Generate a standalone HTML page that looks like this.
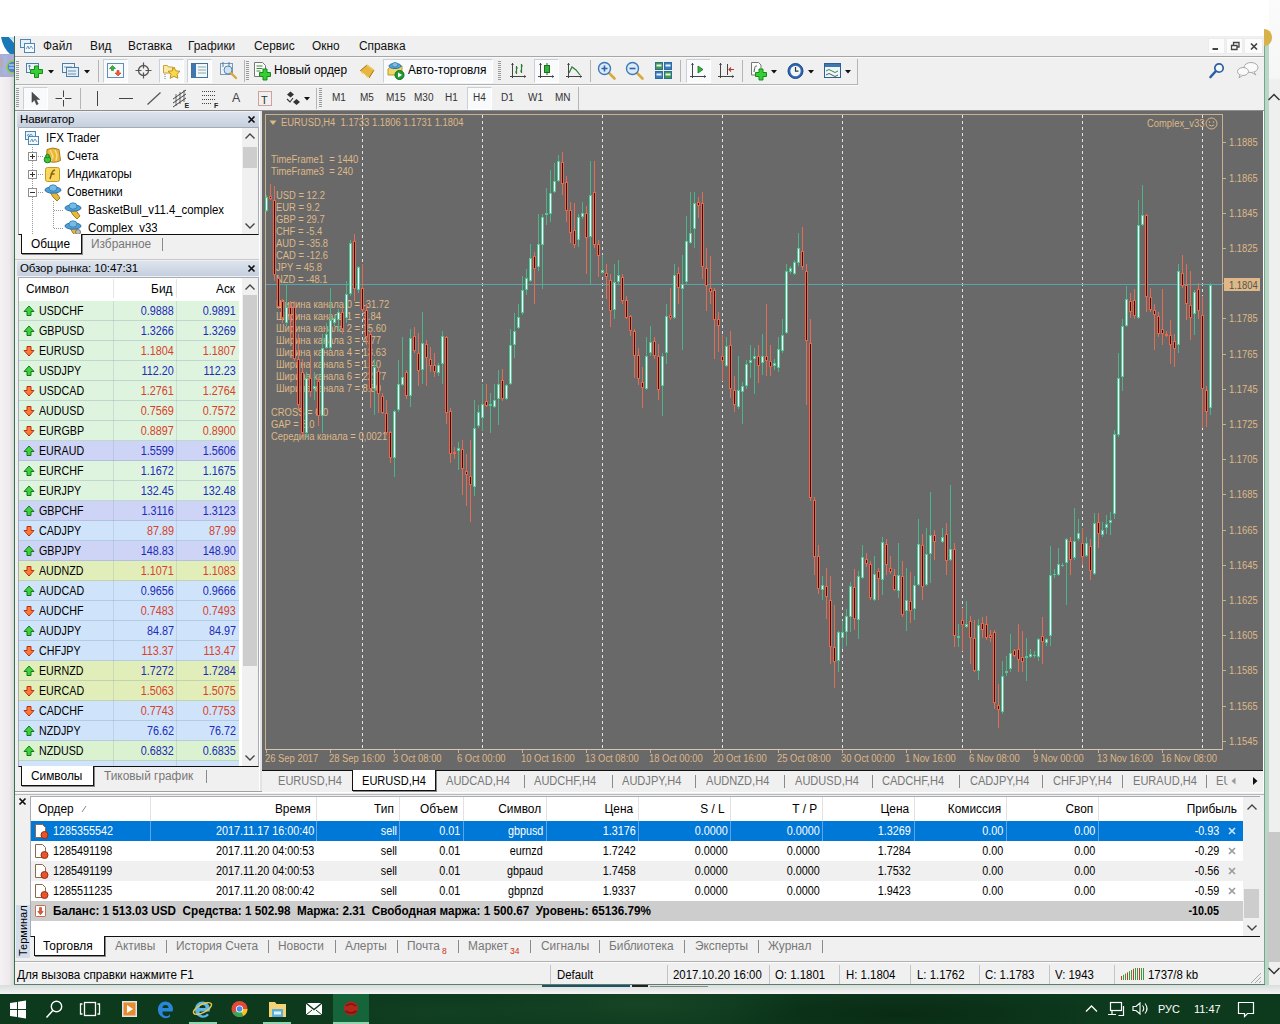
<!DOCTYPE html>
<html lang="ru">
<head>
<meta charset="utf-8">
<title>IFX Trader</title>
<style>
html,body{margin:0;padding:0;}
body{width:1280px;height:1024px;overflow:hidden;background:#fff;position:relative;font-family:"Liberation Sans","DejaVu Sans",sans-serif;font-size:12px;color:#000;}
.abs{position:absolute;}
div,span,svg{box-sizing:border-box;}
.t{position:absolute;white-space:nowrap;line-height:14px;transform-origin:0 50%;transform:scaleX(0.95);}
.t[style*="right:"]{transform-origin:100% 50%;}
.menu .t{font-size:12.5px;top:39px;color:#111;}
.hl{position:absolute;height:1px;background:#a0a0a0;}
.vl{position:absolute;width:1px;background:#a0a0a0;}
.ptitle{position:absolute;height:15px;background:linear-gradient(#dde4ee,#c5cfde);font-size:11.5px;line-height:15px;padding-left:3px;white-space:nowrap;letter-spacing:-0.1px;}
.tf{position:absolute;top:92px;font-size:10px;color:#333;line-height:12px;}
.ic{position:absolute;}
/* market watch */
#mw{position:absolute;left:19px;top:278px;width:222px;height:488px;background:#fff;}
#mw .r{position:absolute;left:0;width:220px;height:20px;border-bottom:1px solid rgba(120,150,170,.30);}
#mw .r span{position:absolute;top:3px;line-height:14px;font-size:12px;white-space:nowrap;}
#mw .s{left:20px;color:#000;transform-origin:0 50%;transform:scaleX(0.89);}
#mw .b{right:65px;transform-origin:100% 50%;transform:scaleX(0.9);}
#mw .a{right:3px;transform-origin:100% 50%;transform:scaleX(0.9);}
.up .b,.up .a{color:#1c2bb8;}
.dn .b,.dn .a{color:#d8402a;}
.g{background:#dff4df;}.l{background:#cdd4f6;}.bl{background:#cfe4fb;}.y{background:#e2eeb9;}.pg{background:#daf2cf;}
.arr{position:absolute;left:4px;top:4px;width:12px;height:12px;}
/* terminal */
.tr{position:absolute;left:31px;width:1212px;height:20px;font-size:12px;}
.tr span{position:absolute;top:3px;line-height:14px;white-space:nowrap;transform-origin:100% 50%;transform:scaleX(0.9);}
.tr span[style*="left:"]{transform-origin:0 50%;}
.tab{position:absolute;font-size:12.5px;color:#777;line-height:14px;white-space:nowrap;transform-origin:0 50%;transform:scaleX(0.95);}
.ct{position:absolute;font-size:10px;color:#deb887;line-height:12px;white-space:nowrap;transform-origin:0 0;transform:scaleX(0.94);margin-top:1px;}
.sep{position:absolute;width:1px;background:#8a8a8a;}
</style>
</head>
<body>
<!-- background bits outside the window -->
<svg class="abs" style="left:0;top:36px" width="14" height="41" viewBox="0 0 14 41"><rect x="0" y="0" width="14" height="18" fill="#fff"/><path d="M1 1 h8 l5 6 v11 h-4 q-7-6 -9-17 z" fill="#1878b8"/><path d="M9 1 l5 5 v-5 z" fill="#bfe3f5"/><rect x="0" y="18" width="14" height="23" fill="#a9afd4"/><rect x="0" y="22" width="3" height="10" fill="#b9a8b8"/><rect x="3" y="20" width="4" height="18" fill="#a3b6e0"/><circle cx="13" cy="31" r="6" fill="#4d86c8" stroke="#9bc34a" stroke-width="1.500"/><path d="M9 29 h5 M9 32 h5" stroke="#dfeaf5" stroke-width="1"/></svg>
<div class="abs" style="left:0;top:77px;width:14px;height:917px;background:linear-gradient(90deg,#f6f2f4,#ece8ec 70%,#cfdccf);"></div>
<div class="abs" style="left:1264px;top:36px;width:1px;height:949px;background:#7aa48c;"></div><div class="abs" style="left:1265px;top:36px;width:4px;height:949px;background:#b9d7c6;"></div>
<div class="abs" style="left:1269px;top:0;width:11px;height:994px;background:linear-gradient(#fbfbfb 0,#f6f6f6 78px,#efefef 80px,#efefef 100%);"></div>
<div class="abs" style="left:1267px;top:832px;width:13px;height:130px;background:#c8c8c8;"></div>
<div class="abs" style="left:0;top:985px;width:1280px;height:9px;background:linear-gradient(#d9dedb,#f4f4f4);"></div>
<svg class="abs" style="left:1268px;top:92px" width="12" height="10" viewBox="0 0 12 10"><path d="M0.500 8 l5.500-5.500 5.500 5.500" fill="none" stroke="#333" stroke-width="1.500"/></svg>
<svg class="abs" style="left:1268px;top:966px" width="12" height="10" viewBox="0 0 12 10"><path d="M0.500 2 l5.500 5.500 5.500-5.500" fill="none" stroke="#333" stroke-width="1.500"/></svg>
<div class="abs" style="left:1264px;top:29px;width:8px;height:17px;border-radius:0 8px 8px 0;background:#d7b24a"></div>
<div class="abs" style="left:542px;top:985px;width:88px;height:2px;background:#1f5268"></div><div class="abs" style="left:632px;top:985px;width:16px;height:2px;background:#222"></div><div class="abs" style="left:650px;top:986px;width:58px;height:1px;background:#8a8a8a"></div>
<!-- window -->
<div class="abs" style="left:14px;top:36px;width:1250px;height:949px;background:#f0f0f0;border-left:1px solid #3d6b55;"></div>

<div class="menu">
<span class="t" style="left:43px">Файл</span>
<span class="t" style="left:90px">Вид</span>
<span class="t" style="left:128px">Вставка</span>
<span class="t" style="left:188px">Графики</span>
<span class="t" style="left:254px">Сервис</span>
<span class="t" style="left:312px">Окно</span>
<span class="t" style="left:359px">Справка</span>
</div>
<!-- app icon in menu bar -->
<svg class="ic" style="left:19px;top:38px" width="18" height="17" viewBox="0 0 18 17"><rect x="1.5" y="1.5" width="10" height="8" fill="#e8f1f8" stroke="#4d86b5"/><rect x="5.500" y="5.500" width="10" height="9" fill="#f4f9fc" stroke="#4d86b5"/><path d="M7 11 l2-3 1 3 2-3 2 3" fill="none" stroke="#4d86b5" stroke-width="0.8"/></svg>
<div class="hl" style="left:15px;top:56px;width:1249px;background:#a6a6a6"></div>
<div class="hl" style="left:15px;top:57px;width:1249px;background:#fafafa"></div>
<div class="hl" style="left:15px;top:84px;width:843px;background:#b4b4b4"></div>
<div class="hl" style="left:15px;top:85px;width:843px;background:#fafafa"></div>
<div class="hl" style="left:15px;top:110px;width:1249px;background:#8d8d8d"></div>
<!-- window buttons -->
<div class="abs" style="left:1208px;top:38px;width:17px;height:16px;background:#fcfcfc;border:1px solid #ececec"></div>
<div class="abs" style="left:1226px;top:38px;width:17px;height:16px;background:#fcfcfc;border:1px solid #ececec"></div>
<div class="abs" style="left:1244px;top:38px;width:19px;height:16px;background:#fcfcfc;border:1px solid #ececec"></div>
<svg class="ic" style="left:1208px;top:38px" width="56" height="17" viewBox="0 0 56 17"><path d="M4.500 11 h5.500" stroke="#444" stroke-width="2"/><path d="M23.500 11.500 h5.500 v-4 h-5.500 z M25.500 7 v-2.500 h5.500 v4.500 h-2" fill="none" stroke="#444" stroke-width="1.300"/><path d="M43 5.500 l6 6 M49 5.500 l-6 6" stroke="#444" stroke-width="1.700"/></svg>
<!-- grips -->
<div class="abs" style="left:16px;top:61px;width:3px;height:20px;background:repeating-linear-gradient(#9a9a9a 0 1px,transparent 1px 2px)"></div>
<div class="abs" style="left:16px;top:88px;width:3px;height:20px;background:repeating-linear-gradient(#9a9a9a 0 1px,transparent 1px 2px)"></div>
<div class="abs" style="left:319px;top:88px;width:3px;height:20px;background:repeating-linear-gradient(#9a9a9a 0 1px,transparent 1px 2px)"></div>
<div class="abs" style="left:498px;top:61px;width:3px;height:20px;background:repeating-linear-gradient(#9a9a9a 0 1px,transparent 1px 2px)"></div>
<div class="abs" style="left:246px;top:61px;width:3px;height:20px;background:repeating-linear-gradient(#9a9a9a 0 1px,transparent 1px 2px)"></div>
<!-- pressed button boxes -->
<div class="abs" style="left:103px;top:59px;width:25px;height:24px;background:#f8fafc;border:1px solid #c9d0d8;border-right-color:#fff;border-bottom-color:#fff"></div>
<div class="abs" style="left:159px;top:59px;width:25px;height:24px;background:#f8fafc;border:1px solid #c9d0d8;border-right-color:#fff;border-bottom-color:#fff"></div>
<div class="abs" style="left:187px;top:59px;width:25px;height:24px;background:#f8fafc;border:1px solid #c9d0d8;border-right-color:#fff;border-bottom-color:#fff"></div>
<div class="abs" style="left:383px;top:59px;width:110px;height:24px;background:#f8fafc;border:1px solid #c9d0d8;border-right-color:#fff;border-bottom-color:#fff"></div>
<div class="abs" style="left:534px;top:59px;width:25px;height:24px;background:#f8fafc;border:1px solid #c9d0d8;border-right-color:#fff;border-bottom-color:#fff"></div>
<div class="abs" style="left:686px;top:59px;width:25px;height:24px;background:#f8fafc;border:1px solid #c9d0d8;border-right-color:#fff;border-bottom-color:#fff"></div>
<div class="abs" style="left:23px;top:87px;width:25px;height:23px;background:#f8fafc;border:1px solid #c9d0d8;border-right-color:#fff;border-bottom-color:#fff"></div>
<div class="abs" style="left:467px;top:87px;width:25px;height:23px;background:#f8fafc;border:1px solid #c9d0d8;border-right-color:#fff;border-bottom-color:#fff"></div>
<!-- separators -->
<div class="vl" style="left:98px;top:60px;height:22px;background:#b5b5b5"></div>
<div class="vl" style="left:244px;top:60px;height:22px;background:#b5b5b5"></div>
<div class="vl" style="left:590px;top:60px;height:22px;background:#b5b5b5"></div>
<div class="vl" style="left:680px;top:60px;height:22px;background:#b5b5b5"></div>
<div class="vl" style="left:742px;top:60px;height:22px;background:#b5b5b5"></div>
<div class="vl" style="left:857px;top:59px;height:25px;background:#b5b5b5"></div>
<div class="vl" style="left:80px;top:88px;height:21px;background:#b5b5b5"></div>
<div class="vl" style="left:316px;top:88px;height:21px;background:#b5b5b5"></div>
<div class="vl" style="left:578px;top:87px;height:23px;background:#b5b5b5"></div>
<!-- row 1 icons -->
<svg class="ic" style="left:25px;top:62px" width="32" height="17" viewBox="0 0 32 17"><rect x="1.500" y="1.500" width="12" height="9" fill="#eef5fa" stroke="#4b7ea8"/><path d="M3 4 h3 M4.500 3 v5" stroke="#4b7ea8" stroke-width="0.800"/><path d="M10 6 h4 v-3.500 h4 v3.500 h4 v4 h-4 v4 h-4 v-4 h-4 z" transform="translate(-4.500,1.500)" fill="#35cf35" stroke="#178a1b"/><path d="M23 8 h6 l-3 3.500 z" fill="#111"/></svg>
<svg class="ic" style="left:61px;top:62px" width="32" height="17" viewBox="0 0 32 17"><rect x="1.500" y="1.500" width="12" height="9" fill="#eef5fa" stroke="#4b7ea8"/><rect x="5.500" y="5.500" width="12" height="9" fill="#e1ecf5" stroke="#4b7ea8"/><path d="M3 5 h8 M7 9 h8 M7 12 h8" stroke="#4b7ea8" stroke-width="0.800"/><path d="M23 8 h6 l-3 3.500 z" fill="#111"/></svg>
<svg class="ic" style="left:107px;top:63px" width="17" height="16" viewBox="0 0 17 16"><rect x="0.500" y="0.500" width="16" height="14" fill="#f6fafd" stroke="#5d8fb8"/><path d="M5.500 2.500 l3 3 h-2 v2 h-2 v-2 h-2 z" fill="#2fb93a" stroke="#14781a" stroke-width="0.600"/><path d="M11 13 l3-3 h-2 v-2.500 h-2 v2.500 h-2 z" fill="#f26038" stroke="#b5320f" stroke-width="0.600"/></svg>
<svg class="ic" style="left:135px;top:62px" width="17" height="17" viewBox="0 0 17 17"><circle cx="8.500" cy="8.500" r="5" fill="none" stroke="#555" stroke-width="1.300"/><path d="M8.500 0.500 v6 M8.500 10.500 v6 M0.500 8.500 h6 M10.500 8.500 h6" stroke="#555" stroke-width="1.200"/></svg>
<svg class="ic" style="left:162px;top:62px" width="19" height="18" viewBox="0 0 19 18"><path d="M1.500 3.500 h4 l1 1.500 h4 v6 h-9 z" fill="#fbe9a4" stroke="#caa43a"/><path d="M3 12 v5" stroke="#777" stroke-dasharray="1 1"/><path d="M12 5 l1.800 3.800 4.200.5 -3 2.900 .8 4.100 -3.800-2 -3.800 2 .8-4.100 -3-2.900 4.200-.5 z" fill="#fbd84a" stroke="#b88a17" stroke-width="0.900"/></svg>
<svg class="ic" style="left:191px;top:63px" width="17" height="16" viewBox="0 0 17 16"><rect x="0.500" y="0.500" width="16" height="14" fill="#f2f7fb" stroke="#41719c"/><rect x="1" y="1" width="4" height="13" fill="#3f78ad"/><path d="M7 4 h8 M7 7 h8 M7 10 h8" stroke="#8aa" stroke-width="1"/></svg>
<svg class="ic" style="left:219px;top:61px" width="20" height="20" viewBox="0 0 20 20"><rect x="1.500" y="2.500" width="12" height="11" fill="#eef3f8" stroke="#7d98b4"/><path d="M4 1 v5 M10 1 v5" stroke="#4b7ea8"/><circle cx="9" cy="9" r="4" fill="#cfe3f5" stroke="#5c86ad"/><path d="M12 12 l5 5" stroke="#d9a93b" stroke-width="2.400" stroke-linecap="round"/></svg>
<svg class="ic" style="left:253px;top:61px" width="18" height="20" viewBox="0 0 18 20"><path d="M1.500 1.500 h8 l3 3 v11 h-11 z" fill="#fbfbfb" stroke="#777"/><path d="M3.500 5 h6 M3.500 7.500 h6 M3.500 10 h4" stroke="#3a8a3f" stroke-width="1"/><path d="M7 12.500 h3.500 v-3.500 h4 v3.500 h3.500 v4 h-3.500 v3.500 h-4 v-3.500 h-3.500 z" transform="translate(-0.500,-1)" fill="#35cf35" stroke="#178a1b"/></svg>
<span class="t" style="left:274px;top:63px;font-size:12.5px">Новый ордер</span>
<svg class="ic" style="left:358px;top:62px" width="18" height="18" viewBox="0 0 18 18"><path d="M2 9 l7-6 7 5 -5 8 z" fill="#e8b640" stroke="#9c7416"/><path d="M2 9 l9 7 M2 10.500 l8.500 6.500" stroke="#fff3c4" stroke-width="1"/><path d="M9 3 l7 5" stroke="#f6d777" stroke-width="1.500"/></svg>
<svg class="ic" style="left:386px;top:61px" width="20" height="20" viewBox="0 0 20 20"><path d="M2 8 l4-3 h10 v9 h-14 z" fill="#f1d66a" stroke="#b99a2a"/><ellipse cx="9" cy="5" rx="6" ry="2.600" fill="#58a5d8" stroke="#2d73a8"/><ellipse cx="9" cy="3.800" rx="3" ry="2.300" fill="#7cc0ea" stroke="#2d73a8" stroke-width="0.700"/><circle cx="13.500" cy="14" r="4.500" fill="#1f9d32" stroke="#0f6a1e"/><path d="M12 11.500 l4 2.500 -4 2.500 z" fill="#fff"/></svg>
<span class="t" style="left:408px;top:63px;font-size:12.5px">Авто-торговля</span>
<svg class="ic" style="left:510px;top:62px" width="17" height="17" viewBox="0 0 17 17"><path d="M2.500 1 v15 M0 14.500 h16" stroke="#444" stroke-width="1"/><path d="M6.500 4 v8 M5 10 h1.500 M6.500 6 h1.500 M11.500 2 v9 M10 9 h1.500 M11.500 4 h1.500" stroke="#2c7d32" stroke-width="1.200"/><path d="M14 13 l2 1.500 -2 1.500 z M1 3 l1.500-2 1.500 2 z" fill="#444"/></svg>
<svg class="ic" style="left:538px;top:62px" width="17" height="17" viewBox="0 0 17 17"><path d="M2.500 1 v15 M0 14.500 h16" stroke="#444" stroke-width="1"/><path d="M9 1 v12" stroke="#1f6e25" stroke-width="1"/><rect x="6.500" y="3.500" width="5" height="7" fill="#35b23c" stroke="#1f6e25"/><path d="M14 13 l2 1.500 -2 1.500 z M1 3 l1.500-2 1.500 2 z" fill="#444"/></svg>
<svg class="ic" style="left:566px;top:62px" width="17" height="17" viewBox="0 0 17 17"><path d="M2.500 1 v15 M0 14.500 h16" stroke="#444" stroke-width="1"/><path d="M3 11 l3-6 4 3 4 5" fill="none" stroke="#2c7d32" stroke-width="1.200"/><path d="M14 13 l2 1.500 -2 1.500 z M1 3 l1.500-2 1.500 2 z" fill="#444"/></svg>
<svg class="ic" style="left:597px;top:61px" width="20" height="20" viewBox="0 0 20 20"><path d="M11.500 11.500 l6 6" stroke="#d9a93b" stroke-width="2.600" stroke-linecap="round"/><circle cx="7.500" cy="7.500" r="6" fill="#dcebf9" stroke="#3d78b8" stroke-width="1.400"/><path d="M4.500 7.500 h6 M7.500 4.500 v6" stroke="#2a62a5" stroke-width="1.600"/></svg>
<svg class="ic" style="left:625px;top:61px" width="20" height="20" viewBox="0 0 20 20"><path d="M11.500 11.500 l6 6" stroke="#d9a93b" stroke-width="2.600" stroke-linecap="round"/><circle cx="7.500" cy="7.500" r="6" fill="#dcebf9" stroke="#3d78b8" stroke-width="1.400"/><path d="M4.500 7.500 h6" stroke="#2a62a5" stroke-width="1.600"/></svg>
<svg class="ic" style="left:655px;top:62px" width="17" height="17" viewBox="0 0 17 17"><rect x="0.500" y="0.500" width="7" height="7" fill="#3f9e3f" stroke="#2c6c9c"/><rect x="9.500" y="0.500" width="7" height="7" fill="#3e7cc0" stroke="#2c6c9c"/><rect x="0.500" y="9.500" width="7" height="7" fill="#3e7cc0" stroke="#2c6c9c"/><rect x="9.500" y="9.500" width="7" height="7" fill="#3f9e3f" stroke="#2c6c9c"/><path d="M1.500 3.500 h5 M10.500 3.500 h5 M1.500 12.500 h5 M10.500 12.500 h5" stroke="#eaf2fa" stroke-width="2"/></svg>
<svg class="ic" style="left:690px;top:62px" width="17" height="17" viewBox="0 0 17 17"><path d="M2.500 1 v15 M0 14.500 h16" stroke="#444" stroke-width="1"/><path d="M8 4 l5 3.500 -5 3.500 z" fill="#35b23c" stroke="#1f6e25" stroke-width="0.800"/><path d="M14 13 l2 1.500 -2 1.500 z M1 3 l1.500-2 1.500 2 z" fill="#444"/></svg>
<svg class="ic" style="left:718px;top:62px" width="17" height="17" viewBox="0 0 17 17"><path d="M2.500 1 v15 M0 14.500 h16 M9.500 2 v11" stroke="#444" stroke-width="1"/><path d="M16 7.500 h-5 M13 5.500 l-2 2 2 2" fill="none" stroke="#b03a2e" stroke-width="1.100"/><path d="M14 13 l2 1.500 -2 1.500 z M1 3 l1.500-2 1.500 2 z" fill="#444"/></svg>
<svg class="ic" style="left:749px;top:61px" width="30" height="20" viewBox="0 0 30 20"><path d="M2.500 1.500 h7 l2.500 2.500 v10 h-9.500 z" fill="#fbfbfb" stroke="#777"/><path d="M5 11 c1-6 1-6 3-6" fill="none" stroke="#555" stroke-width="1"/><path d="M6.500 11.500 h3.500 v-3.500 h4 v3.500 h3.500 v4 h-3.500 v3.500 h-4 v-3.500 h-3.500 z" fill="#35cf35" stroke="#178a1b"/><path d="M22 9 h6 l-3 3.500 z" fill="#111"/></svg>
<svg class="ic" style="left:786px;top:61px" width="30" height="20" viewBox="0 0 30 20"><circle cx="9.500" cy="10" r="7.500" fill="#2e67b2" stroke="#1c4482"/><circle cx="9.500" cy="10" r="5.200" fill="#f1f6fb"/><path d="M9.500 6 v4.200 h3" fill="none" stroke="#333" stroke-width="1.200"/><path d="M22 9 h6 l-3 3.500 z" fill="#111"/></svg>
<svg class="ic" style="left:823px;top:62px" width="30" height="18" viewBox="0 0 30 18"><rect x="1.500" y="1.500" width="16" height="14" fill="#eef5fb" stroke="#2e5f93"/><rect x="2" y="2" width="15" height="3" fill="#3f78ad"/><path d="M3 9 q3-3 6 0 t6 0" fill="none" stroke="#3a8a3f" stroke-width="1"/><path d="M3 13 q3-3 6 0 t6 0" fill="none" stroke="#555" stroke-width="1"/><path d="M22 8 h6 l-3 3.500 z" fill="#111"/></svg>
<!-- right side search + chat -->
<svg class="ic" style="left:1208px;top:62px" width="18" height="18" viewBox="0 0 18 18"><path d="M2.500 15 l5-5.500" stroke="#2b5fa5" stroke-width="2.600" stroke-linecap="round"/><circle cx="11" cy="6" r="4.200" fill="#f5f9fd" stroke="#2b5fa5" stroke-width="1.700"/></svg>
<svg class="ic" style="left:1236px;top:61px" width="24" height="19" viewBox="0 0 24 19"><ellipse cx="15" cy="6.500" rx="7" ry="5" fill="#fafafa" stroke="#a8a8a8"/><path d="M18 11 l2 3 -4-2.300" fill="#fafafa" stroke="#a8a8a8"/><ellipse cx="7" cy="10.500" rx="5.500" ry="4" fill="#fafafa" stroke="#a8a8a8"/><path d="M4 13.800 l-1 3 3.500-2.300" fill="#fafafa" stroke="#a8a8a8"/></svg>
<!-- row 2 icons -->
<svg class="ic" style="left:29px;top:91px" width="13" height="15" viewBox="0 0 16 19"><path d="M3.500 1.500 v13 l3.200-3 2.600 6 2.200-1 -2.600-5.800 h4.400 z" fill="#4d4d4d" stroke="#3a3a3a" stroke-width="0.600"/></svg>
<svg class="ic" style="left:55px;top:90px" width="17" height="17" viewBox="0 0 17 17"><path d="M8.500 0.500 v6.500 M8.500 10 v6.500 M0.500 8.500 h6.500 M10 8.500 h6.500" stroke="#444" stroke-width="1"/></svg>
<div class="abs" style="left:97px;top:91px;width:1px;height:15px;background:#444"></div>
<div class="abs" style="left:119px;top:98px;width:14px;height:1px;background:#444"></div>
<svg class="ic" style="left:146px;top:91px" width="16" height="15" viewBox="0 0 16 15"><path d="M1.500 13.500 l13-12" stroke="#555" stroke-width="1.200"/></svg>
<svg class="ic" style="left:172px;top:89px" width="20" height="19" viewBox="0 0 20 19"><path d="M1 13 l13-9 M1 9 l13-9 M1 17 l13-9" stroke="#444" stroke-width="1" transform="translate(0,1)"/><path d="M4 4 v12 M8 2 v12 M12 0 v12" stroke="#444" stroke-width="0.800" transform="translate(0,1)"/><text x="12.500" y="18.500" font-size="7" font-weight="bold" font-family="Liberation Sans, sans-serif" fill="#222">E</text></svg>
<svg class="ic" style="left:201px;top:90px" width="20" height="18" viewBox="0 0 20 18"><path d="M1 1.500 h13 M1 5.500 h13 M1 9.500 h13 M1 13.500 h10" stroke="#444" stroke-width="1" stroke-dasharray="1 1"/><text x="13" y="17.500" font-size="7" font-weight="bold" font-family="Liberation Sans, sans-serif" fill="#222">F</text></svg>
<span class="t" style="left:232px;top:91px;font-size:13px;color:#444">A</span>
<svg class="ic" style="left:257px;top:90px" width="16" height="17" viewBox="0 0 16 17"><rect x="1.500" y="1.500" width="13" height="14" fill="none" stroke="#b0504a" stroke-dasharray="1 1"/><text x="4" y="13.500" font-size="11" font-family="Liberation Sans, sans-serif" fill="#333">T</text></svg>
<svg class="ic" style="left:284px;top:90px" width="30" height="17" viewBox="0 0 30 17"><path d="M3 4.500 l3.500-3 3.500 3 -3.500 3 z M9 12 l3.500-3 3.500 3 -3.500 3 z" fill="#333"/><path d="M3 9 l3 3 3-4" fill="none" stroke="#333" stroke-width="1.100"/><path d="M20 7 h6 l-3 3.500 z" fill="#111"/></svg>
<span class="tf" style="left:332px">M1</span><span class="tf" style="left:360px">M5</span><span class="tf" style="left:386px">M15</span><span class="tf" style="left:414px">M30</span><span class="tf" style="left:445px">H1</span><span class="tf" style="left:473px">H4</span><span class="tf" style="left:501px">D1</span><span class="tf" style="left:528px">W1</span><span class="tf" style="left:555px">MN</span>

<!-- Navigator -->
<div class="abs" style="left:15px;top:111px;width:246px;height:681px;background:#f0f0f0"></div>
<div class="ptitle" style="left:17px;top:112px;width:243px">Навигатор</div>
<svg class="ic" style="left:247px;top:115px" width="9" height="9" viewBox="0 0 9 9"><path d="M1.500 1.500 l6 6 M7.500 1.500 l-6 6" stroke="#111" stroke-width="1.700"/></svg>
<div class="abs" style="left:18px;top:127px;width:241px;height:108px;background:#fff;border:1px solid #a5acb5;border-bottom:1px solid #111"></div>
<!-- tree scrollbar -->
<div class="abs" style="left:242px;top:128px;width:16px;height:106px;background:#f0f0f0"></div>
<div class="abs" style="left:243px;top:147px;width:14px;height:21px;background:#cdcdcd"></div>
<svg class="ic" style="left:244px;top:132px" width="12" height="8" viewBox="0 0 12 8"><path d="M1.500 6.500 l4.500-4.500 4.500 4.500" fill="none" stroke="#444" stroke-width="1.400"/></svg>
<svg class="ic" style="left:244px;top:222px" width="12" height="8" viewBox="0 0 12 8"><path d="M1.500 1.500 l4.500 4.500 4.500-4.500" fill="none" stroke="#444" stroke-width="1.400"/></svg>
<!-- tree dotted lines -->
<div class="abs" style="left:32px;top:147px;width:1px;height:87px;background:repeating-linear-gradient(#999 0 1px,transparent 1px 2px)"></div>
<div class="abs" style="left:53px;top:201px;width:1px;height:28px;background:repeating-linear-gradient(#999 0 1px,transparent 1px 2px)"></div>
<div class="abs" style="left:36px;top:156px;width:7px;height:1px;background:repeating-linear-gradient(90deg,#999 0 1px,transparent 1px 2px)"></div>
<div class="abs" style="left:36px;top:174px;width:7px;height:1px;background:repeating-linear-gradient(90deg,#999 0 1px,transparent 1px 2px)"></div>
<div class="abs" style="left:36px;top:192px;width:7px;height:1px;background:repeating-linear-gradient(90deg,#999 0 1px,transparent 1px 2px)"></div>
<div class="abs" style="left:54px;top:210px;width:9px;height:1px;background:repeating-linear-gradient(90deg,#999 0 1px,transparent 1px 2px)"></div>
<div class="abs" style="left:54px;top:228px;width:9px;height:1px;background:repeating-linear-gradient(90deg,#999 0 1px,transparent 1px 2px)"></div>
<!-- expand boxes -->
<svg class="ic" style="left:28px;top:152px" width="9" height="9" viewBox="0 0 9 9"><rect x="0.500" y="0.500" width="8" height="8" fill="#fff" stroke="#8f8f8f"/><path d="M2 4.500 h5 M4.500 2 v5" stroke="#333"/></svg>
<svg class="ic" style="left:28px;top:170px" width="9" height="9" viewBox="0 0 9 9"><rect x="0.500" y="0.500" width="8" height="8" fill="#fff" stroke="#8f8f8f"/><path d="M2 4.500 h5 M4.500 2 v5" stroke="#333"/></svg>
<svg class="ic" style="left:28px;top:188px" width="9" height="9" viewBox="0 0 9 9"><rect x="0.500" y="0.500" width="8" height="8" fill="#fff" stroke="#8f8f8f"/><path d="M2 4.500 h5" stroke="#333"/></svg>
<!-- tree icons -->
<svg class="ic" style="left:24px;top:130px" width="17" height="17" viewBox="0 0 17 17"><rect x="1.500" y="1.500" width="10" height="8" fill="#e8f1f8" stroke="#4d86b5"/><rect x="4.500" y="6.500" width="10" height="8" fill="#f4f9fc" stroke="#4d86b5"/><path d="M6 12 l2-3 1 3 2-3 2 3 M3 6 l1.500-2 1 2 1.500-2 1.500 2" fill="none" stroke="#4d86b5" stroke-width="0.800"/></svg>
<svg class="ic" style="left:43px;top:147px" width="19" height="18" viewBox="0 0 19 18"><path d="M4 2.500 q6-3 12 0 l1.500 11 q-7 3.500 -14 0 z" fill="#e9b83a" stroke="#a87c14"/><path d="M7 3 l3 6 -2 5 M12 3 l2 5 -1 6" fill="none" stroke="#f8e08a" stroke-width="1.300"/><circle cx="4.500" cy="12.500" r="3.300" fill="#3ec43e" stroke="#1c7d22"/><circle cx="4.500" cy="9" r="1.800" fill="#3ec43e" stroke="#1c7d22"/></svg>
<svg class="ic" style="left:44px;top:166px" width="17" height="17" viewBox="0 0 17 17"><rect x="1.500" y="1.500" width="14" height="14" rx="2" fill="#f7d75c" stroke="#c39a27"/><path d="M6 13 c2.500-8 2-8 5-9 M6.500 8 h4" fill="none" stroke="#8a5a12" stroke-width="1.400"/></svg>
<svg class="ic" style="left:44px;top:183px" width="20" height="19" viewBox="0 0 20 19"><path d="M6 9 l5-1 5 7 -3 3 -4-4 z" fill="#e9b83a" stroke="#a87c14"/><ellipse cx="9" cy="7" rx="8" ry="3.200" fill="#4f9fd6" stroke="#2d73a8"/><ellipse cx="9" cy="5" rx="4" ry="3.200" fill="#74bbe8" stroke="#2d73a8" stroke-width="0.700"/></svg>
<svg class="ic" style="left:64px;top:201px" width="20" height="19" viewBox="0 0 20 19"><path d="M6 9 l5-1 5 7 -3 3 -4-4 z" fill="#e9b83a" stroke="#a87c14"/><ellipse cx="9" cy="7" rx="8" ry="3.200" fill="#4f9fd6" stroke="#2d73a8"/><ellipse cx="9" cy="5" rx="4" ry="3.200" fill="#74bbe8" stroke="#2d73a8" stroke-width="0.700"/></svg>
<svg class="ic" style="left:64px;top:219px" width="20" height="15" viewBox="0 0 20 15"><path d="M6 9 l5-1 5 7 -3 3 -4-4 z" fill="#e9b83a" stroke="#a87c14"/><ellipse cx="9" cy="7" rx="8" ry="3.200" fill="#4f9fd6" stroke="#2d73a8"/><ellipse cx="9" cy="5" rx="4" ry="3.200" fill="#74bbe8" stroke="#2d73a8" stroke-width="0.700"/><circle cx="14" cy="13" r="2.500" fill="#bbb" stroke="#777"/></svg>
<!-- tree labels -->
<span class="t" style="left:46px;top:131px">IFX Trader</span>
<span class="t" style="left:67px;top:149px">Счета</span>
<span class="t" style="left:67px;top:167px">Индикаторы</span>
<span class="t" style="left:67px;top:185px">Советники</span>
<span class="t" style="left:88px;top:203px">BasketBull_v11.4_complex</span>
<span class="t" style="left:88px;top:221px;height:13px;overflow:hidden">Complex_v33</span>
<!-- navigator tabs -->
<div class="abs" style="left:21px;top:234px;width:61px;height:20px;background:#fff;border:1px solid #111;border-top:none;box-shadow:1px 1px 0 #888"></div>
<span class="t" style="left:31px;top:237px;font-size:12.5px">Общие</span>
<span class="tab" style="left:91px;top:237px">Избранное</span>
<div class="sep" style="left:162px;top:238px;height:13px"></div>
<div class="hl" style="left:15px;top:259px;width:246px;background:#c8c8c8"></div>
<!-- Market watch -->
<div class="ptitle" style="left:17px;top:261px;width:243px">Обзор рынка: 10:47:31</div>
<svg class="ic" style="left:247px;top:264px" width="9" height="9" viewBox="0 0 9 9"><path d="M1.500 1.500 l6 6 M7.500 1.500 l-6 6" stroke="#111" stroke-width="1.700"/></svg>
<div class="abs" style="left:18px;top:277px;width:241px;height:490px;background:#fff;border:1px solid #a5acb5;border-bottom:1px solid #111"></div>
<div class="abs" style="left:242px;top:278px;width:16px;height:488px;background:#f0f0f0"></div>
<div class="abs" style="left:243px;top:295px;width:14px;height:371px;background:#cdcdcd"></div>
<svg class="ic" style="left:244px;top:283px" width="12" height="8" viewBox="0 0 12 8"><path d="M1.500 6.500 l4.500-4.500 4.500 4.500" fill="none" stroke="#444" stroke-width="1.400"/></svg>
<svg class="ic" style="left:244px;top:754px" width="12" height="8" viewBox="0 0 12 8"><path d="M1.500 1.500 l4.500 4.500 4.500-4.500" fill="none" stroke="#444" stroke-width="1.400"/></svg>
<!-- MW tabs -->
<div class="abs" style="left:21px;top:766px;width:73px;height:20px;background:#fff;border:1px solid #111;border-top:none;box-shadow:1px 1px 0 #888"></div>
<span class="t" style="left:31px;top:769px;font-size:12.5px">Символы</span>
<span class="tab" style="left:104px;top:769px">Тиковый график</span>
<div class="sep" style="left:206px;top:770px;height:13px"></div>
<div class="abs" style="left:259px;top:111px;width:1px;height:681px;background:#fff"></div>
<div class="abs" style="left:260px;top:111px;width:2px;height:681px;background:#e3e3e3"></div>
<div class="hl" style="left:15px;top:791px;width:247px;background:#a0a0a0"></div>

<div id="mw">
<div class="abs" style="left:0;top:0;width:222px;height:22px;background:#fff"></div><div class="abs" style="left:94px;top:1px;width:1px;height:19px;background:#e5e5e5"></div><div class="abs" style="left:157px;top:1px;width:1px;height:19px;background:#e5e5e5"></div><span class="t" style="left:7px;top:4px;font-size:12.500px">Символ</span><span class="t" style="right:69px;top:4px;font-size:12.500px">Бид</span><span class="t" style="right:6px;top:4px;font-size:12.500px">Аск</span>
<div class="r up g" style="top:23px"><svg class="arr" viewBox="0 0 12 12"><path d="M6 1 L11 6.5 H8 V10.5 H4 V6.5 H1 Z" fill="#3fd13f" stroke="#14781a" stroke-width="1"/></svg><span class="s">USDCHF</span><span class="b">0.9888</span><span class="a">0.9891</span></div>
<div class="r up g" style="top:43px"><svg class="arr" viewBox="0 0 12 12"><path d="M6 1 L11 6.5 H8 V10.5 H4 V6.5 H1 Z" fill="#3fd13f" stroke="#14781a" stroke-width="1"/></svg><span class="s">GBPUSD</span><span class="b">1.3266</span><span class="a">1.3269</span></div>
<div class="r dn g" style="top:63px"><svg class="arr" viewBox="0 0 12 12"><path d="M6 11 L11 5.5 H8 V1.5 H4 V5.5 H1 Z" fill="#ff7a3a" stroke="#b5320f" stroke-width="1"/></svg><span class="s">EURUSD</span><span class="b">1.1804</span><span class="a">1.1807</span></div>
<div class="r up g" style="top:83px"><svg class="arr" viewBox="0 0 12 12"><path d="M6 1 L11 6.5 H8 V10.5 H4 V6.5 H1 Z" fill="#3fd13f" stroke="#14781a" stroke-width="1"/></svg><span class="s">USDJPY</span><span class="b">112.20</span><span class="a">112.23</span></div>
<div class="r dn g" style="top:103px"><svg class="arr" viewBox="0 0 12 12"><path d="M6 11 L11 5.5 H8 V1.5 H4 V5.5 H1 Z" fill="#ff7a3a" stroke="#b5320f" stroke-width="1"/></svg><span class="s">USDCAD</span><span class="b">1.2761</span><span class="a">1.2764</span></div>
<div class="r dn g" style="top:123px"><svg class="arr" viewBox="0 0 12 12"><path d="M6 11 L11 5.5 H8 V1.5 H4 V5.5 H1 Z" fill="#ff7a3a" stroke="#b5320f" stroke-width="1"/></svg><span class="s">AUDUSD</span><span class="b">0.7569</span><span class="a">0.7572</span></div>
<div class="r dn g" style="top:143px"><svg class="arr" viewBox="0 0 12 12"><path d="M6 11 L11 5.5 H8 V1.5 H4 V5.5 H1 Z" fill="#ff7a3a" stroke="#b5320f" stroke-width="1"/></svg><span class="s">EURGBP</span><span class="b">0.8897</span><span class="a">0.8900</span></div>
<div class="r up l" style="top:163px"><svg class="arr" viewBox="0 0 12 12"><path d="M6 1 L11 6.5 H8 V10.5 H4 V6.5 H1 Z" fill="#3fd13f" stroke="#14781a" stroke-width="1"/></svg><span class="s">EURAUD</span><span class="b">1.5599</span><span class="a">1.5606</span></div>
<div class="r up g" style="top:183px"><svg class="arr" viewBox="0 0 12 12"><path d="M6 1 L11 6.5 H8 V10.5 H4 V6.5 H1 Z" fill="#3fd13f" stroke="#14781a" stroke-width="1"/></svg><span class="s">EURCHF</span><span class="b">1.1672</span><span class="a">1.1675</span></div>
<div class="r up g" style="top:203px"><svg class="arr" viewBox="0 0 12 12"><path d="M6 1 L11 6.5 H8 V10.5 H4 V6.5 H1 Z" fill="#3fd13f" stroke="#14781a" stroke-width="1"/></svg><span class="s">EURJPY</span><span class="b">132.45</span><span class="a">132.48</span></div>
<div class="r up l" style="top:223px"><svg class="arr" viewBox="0 0 12 12"><path d="M6 1 L11 6.5 H8 V10.5 H4 V6.5 H1 Z" fill="#3fd13f" stroke="#14781a" stroke-width="1"/></svg><span class="s">GBPCHF</span><span class="b">1.3116</span><span class="a">1.3123</span></div>
<div class="r dn bl" style="top:243px"><svg class="arr" viewBox="0 0 12 12"><path d="M6 11 L11 5.5 H8 V1.5 H4 V5.5 H1 Z" fill="#ff7a3a" stroke="#b5320f" stroke-width="1"/></svg><span class="s">CADJPY</span><span class="b">87.89</span><span class="a">87.99</span></div>
<div class="r up l" style="top:263px"><svg class="arr" viewBox="0 0 12 12"><path d="M6 1 L11 6.5 H8 V10.5 H4 V6.5 H1 Z" fill="#3fd13f" stroke="#14781a" stroke-width="1"/></svg><span class="s">GBPJPY</span><span class="b">148.83</span><span class="a">148.90</span></div>
<div class="r dn y" style="top:283px"><svg class="arr" viewBox="0 0 12 12"><path d="M6 11 L11 5.5 H8 V1.5 H4 V5.5 H1 Z" fill="#ff7a3a" stroke="#b5320f" stroke-width="1"/></svg><span class="s">AUDNZD</span><span class="b">1.1071</span><span class="a">1.1083</span></div>
<div class="r up bl" style="top:303px"><svg class="arr" viewBox="0 0 12 12"><path d="M6 1 L11 6.5 H8 V10.5 H4 V6.5 H1 Z" fill="#3fd13f" stroke="#14781a" stroke-width="1"/></svg><span class="s">AUDCAD</span><span class="b">0.9656</span><span class="a">0.9666</span></div>
<div class="r dn bl" style="top:323px"><svg class="arr" viewBox="0 0 12 12"><path d="M6 11 L11 5.5 H8 V1.5 H4 V5.5 H1 Z" fill="#ff7a3a" stroke="#b5320f" stroke-width="1"/></svg><span class="s">AUDCHF</span><span class="b">0.7483</span><span class="a">0.7493</span></div>
<div class="r up bl" style="top:343px"><svg class="arr" viewBox="0 0 12 12"><path d="M6 1 L11 6.5 H8 V10.5 H4 V6.5 H1 Z" fill="#3fd13f" stroke="#14781a" stroke-width="1"/></svg><span class="s">AUDJPY</span><span class="b">84.87</span><span class="a">84.97</span></div>
<div class="r dn bl" style="top:363px"><svg class="arr" viewBox="0 0 12 12"><path d="M6 11 L11 5.5 H8 V1.5 H4 V5.5 H1 Z" fill="#ff7a3a" stroke="#b5320f" stroke-width="1"/></svg><span class="s">CHFJPY</span><span class="b">113.37</span><span class="a">113.47</span></div>
<div class="r up y" style="top:383px"><svg class="arr" viewBox="0 0 12 12"><path d="M6 1 L11 6.5 H8 V10.5 H4 V6.5 H1 Z" fill="#3fd13f" stroke="#14781a" stroke-width="1"/></svg><span class="s">EURNZD</span><span class="b">1.7272</span><span class="a">1.7284</span></div>
<div class="r dn y" style="top:403px"><svg class="arr" viewBox="0 0 12 12"><path d="M6 11 L11 5.5 H8 V1.5 H4 V5.5 H1 Z" fill="#ff7a3a" stroke="#b5320f" stroke-width="1"/></svg><span class="s">EURCAD</span><span class="b">1.5063</span><span class="a">1.5075</span></div>
<div class="r dn bl" style="top:423px"><svg class="arr" viewBox="0 0 12 12"><path d="M6 11 L11 5.5 H8 V1.5 H4 V5.5 H1 Z" fill="#ff7a3a" stroke="#b5320f" stroke-width="1"/></svg><span class="s">CADCHF</span><span class="b">0.7743</span><span class="a">0.7753</span></div>
<div class="r up bl" style="top:443px"><svg class="arr" viewBox="0 0 12 12"><path d="M6 1 L11 6.5 H8 V10.5 H4 V6.5 H1 Z" fill="#3fd13f" stroke="#14781a" stroke-width="1"/></svg><span class="s">NZDJPY</span><span class="b">76.62</span><span class="a">76.72</span></div>
<div class="r up pg" style="top:463px"><svg class="arr" viewBox="0 0 12 12"><path d="M6 1 L11 6.5 H8 V10.5 H4 V6.5 H1 Z" fill="#3fd13f" stroke="#14781a" stroke-width="1"/></svg><span class="s">NZDUSD</span><span class="b">0.6832</span><span class="a">0.6835</span></div>
<div class="r bl" style="top:483px;height:5px;border:none"></div>
<div class="abs" style="left:94px;top:23px;width:1px;height:465px;background:rgba(120,150,170,.22)"></div><div class="abs" style="left:157px;top:23px;width:1px;height:465px;background:rgba(120,150,170,.22)"></div>
</div>
<!-- chart -->
<div class="abs" style="left:262px;top:111px;width:1001px;height:659px;background:#696969"></div>
<div class="abs" style="left:1263px;top:111px;width:1px;height:681px;background:#fdfdfd"></div>
<div class="abs" style="left:265px;top:114px;width:958px;height:636px;border:1px solid #c9b08e;border-bottom-color:#d9c5a8"></div>
<div class="abs" style="left:362px;top:115px;width:1px;height:634px;background:repeating-linear-gradient(#e4e4e4 0 3px,transparent 3px 6px)"></div>
<div class="abs" style="left:482px;top:115px;width:1px;height:634px;background:repeating-linear-gradient(#e4e4e4 0 3px,transparent 3px 6px)"></div>
<div class="abs" style="left:602px;top:115px;width:1px;height:634px;background:repeating-linear-gradient(#e4e4e4 0 3px,transparent 3px 6px)"></div>
<div class="abs" style="left:722px;top:115px;width:1px;height:634px;background:repeating-linear-gradient(#e4e4e4 0 3px,transparent 3px 6px)"></div>
<div class="abs" style="left:842px;top:115px;width:1px;height:634px;background:repeating-linear-gradient(#e4e4e4 0 3px,transparent 3px 6px)"></div>
<div class="abs" style="left:962px;top:115px;width:1px;height:634px;background:repeating-linear-gradient(#e4e4e4 0 3px,transparent 3px 6px)"></div>
<div class="abs" style="left:1082px;top:115px;width:1px;height:634px;background:repeating-linear-gradient(#e4e4e4 0 3px,transparent 3px 6px)"></div>
<div class="abs" style="left:1202px;top:115px;width:1px;height:634px;background:repeating-linear-gradient(#e4e4e4 0 3px,transparent 3px 6px)"></div>
<div class="abs" style="left:266px;top:284px;width:956px;height:1px;background:#55a7ad"></div>
<div class="abs" style="left:1223px;top:142px;width:3px;height:1px;background:#c9b08e"></div>
<span class="ct" style="left:1229px;top:136px">1.1885</span>
<div class="abs" style="left:1223px;top:178px;width:3px;height:1px;background:#c9b08e"></div>
<span class="ct" style="left:1229px;top:172px">1.1865</span>
<div class="abs" style="left:1223px;top:213px;width:3px;height:1px;background:#c9b08e"></div>
<span class="ct" style="left:1229px;top:207px">1.1845</span>
<div class="abs" style="left:1223px;top:248px;width:3px;height:1px;background:#c9b08e"></div>
<span class="ct" style="left:1229px;top:242px">1.1825</span>
<div class="abs" style="left:1223px;top:283px;width:3px;height:1px;background:#c9b08e"></div>
<span class="ct" style="left:1229px;top:277px">1.1805</span>
<div class="abs" style="left:1223px;top:318px;width:3px;height:1px;background:#c9b08e"></div>
<span class="ct" style="left:1229px;top:312px">1.1785</span>
<div class="abs" style="left:1223px;top:354px;width:3px;height:1px;background:#c9b08e"></div>
<span class="ct" style="left:1229px;top:348px">1.1765</span>
<div class="abs" style="left:1223px;top:389px;width:3px;height:1px;background:#c9b08e"></div>
<span class="ct" style="left:1229px;top:383px">1.1745</span>
<div class="abs" style="left:1223px;top:424px;width:3px;height:1px;background:#c9b08e"></div>
<span class="ct" style="left:1229px;top:418px">1.1725</span>
<div class="abs" style="left:1223px;top:459px;width:3px;height:1px;background:#c9b08e"></div>
<span class="ct" style="left:1229px;top:453px">1.1705</span>
<div class="abs" style="left:1223px;top:494px;width:3px;height:1px;background:#c9b08e"></div>
<span class="ct" style="left:1229px;top:488px">1.1685</span>
<div class="abs" style="left:1223px;top:530px;width:3px;height:1px;background:#c9b08e"></div>
<span class="ct" style="left:1229px;top:524px">1.1665</span>
<div class="abs" style="left:1223px;top:565px;width:3px;height:1px;background:#c9b08e"></div>
<span class="ct" style="left:1229px;top:559px">1.1645</span>
<div class="abs" style="left:1223px;top:600px;width:3px;height:1px;background:#c9b08e"></div>
<span class="ct" style="left:1229px;top:594px">1.1625</span>
<div class="abs" style="left:1223px;top:635px;width:3px;height:1px;background:#c9b08e"></div>
<span class="ct" style="left:1229px;top:629px">1.1605</span>
<div class="abs" style="left:1223px;top:670px;width:3px;height:1px;background:#c9b08e"></div>
<span class="ct" style="left:1229px;top:664px">1.1585</span>
<div class="abs" style="left:1223px;top:706px;width:3px;height:1px;background:#c9b08e"></div>
<span class="ct" style="left:1229px;top:700px">1.1565</span>
<div class="abs" style="left:1223px;top:741px;width:3px;height:1px;background:#c9b08e"></div>
<span class="ct" style="left:1229px;top:735px">1.1545</span>
<div class="abs" style="left:1224px;top:278px;width:36px;height:13px;background:#deb887"></div><span class="ct" style="left:1229px;top:279px;color:#555">1.1804</span>
<div class="abs" style="left:266px;top:750px;width:1px;height:3px;background:#c9b08e"></div>
<span class="ct" style="left:265px;top:752px">26 Sep 2017</span>
<div class="abs" style="left:330px;top:750px;width:1px;height:3px;background:#c9b08e"></div>
<span class="ct" style="left:329px;top:752px">28 Sep 16:00</span>
<div class="abs" style="left:394px;top:750px;width:1px;height:3px;background:#c9b08e"></div>
<span class="ct" style="left:393px;top:752px">3 Oct 08:00</span>
<div class="abs" style="left:458px;top:750px;width:1px;height:3px;background:#c9b08e"></div>
<span class="ct" style="left:457px;top:752px">6 Oct 00:00</span>
<div class="abs" style="left:522px;top:750px;width:1px;height:3px;background:#c9b08e"></div>
<span class="ct" style="left:521px;top:752px">10 Oct 16:00</span>
<div class="abs" style="left:586px;top:750px;width:1px;height:3px;background:#c9b08e"></div>
<span class="ct" style="left:585px;top:752px">13 Oct 08:00</span>
<div class="abs" style="left:650px;top:750px;width:1px;height:3px;background:#c9b08e"></div>
<span class="ct" style="left:649px;top:752px">18 Oct 00:00</span>
<div class="abs" style="left:714px;top:750px;width:1px;height:3px;background:#c9b08e"></div>
<span class="ct" style="left:713px;top:752px">20 Oct 16:00</span>
<div class="abs" style="left:778px;top:750px;width:1px;height:3px;background:#c9b08e"></div>
<span class="ct" style="left:777px;top:752px">25 Oct 08:00</span>
<div class="abs" style="left:842px;top:750px;width:1px;height:3px;background:#c9b08e"></div>
<span class="ct" style="left:841px;top:752px">30 Oct 00:00</span>
<div class="abs" style="left:906px;top:750px;width:1px;height:3px;background:#c9b08e"></div>
<span class="ct" style="left:905px;top:752px">1 Nov 16:00</span>
<div class="abs" style="left:970px;top:750px;width:1px;height:3px;background:#c9b08e"></div>
<span class="ct" style="left:969px;top:752px">6 Nov 08:00</span>
<div class="abs" style="left:1034px;top:750px;width:1px;height:3px;background:#c9b08e"></div>
<span class="ct" style="left:1033px;top:752px">9 Nov 00:00</span>
<div class="abs" style="left:1098px;top:750px;width:1px;height:3px;background:#c9b08e"></div>
<span class="ct" style="left:1097px;top:752px">13 Nov 16:00</span>
<div class="abs" style="left:1162px;top:750px;width:1px;height:3px;background:#c9b08e"></div>
<span class="ct" style="left:1161px;top:752px">16 Nov 08:00</span>
<svg class="ic" style="left:269px;top:120px" width="8" height="6" viewBox="0 0 8 6"><path d="M0.500 0.500 h7 l-3.500 4.500 z" fill="#deb887"/></svg>
<span class="ct" style="left:281px;top:116px">EURUSD,H4&nbsp; 1.1733 1.1806 1.1731 1.1804</span>
<span class="ct" style="left:1147px;top:117px">Complex_v33</span>
<svg class="ic" style="left:1205px;top:117px" width="13" height="13" viewBox="0 0 13 13"><circle cx="6.500" cy="6.500" r="5.500" fill="none" stroke="#deb887"/><circle cx="4.500" cy="5" r="0.800" fill="#deb887"/><circle cx="8.500" cy="5" r="0.800" fill="#deb887"/><path d="M3.800 7.800 q2.700 2.600 5.400 0" fill="none" stroke="#deb887"/></svg>
<span class="ct" style="left:271px;top:153px">TimeFrame1&nbsp; = 1440</span>
<span class="ct" style="left:271px;top:165px">TimeFrame3&nbsp; = 240</span>
<span class="ct" style="left:276px;top:189px">USD = 12.2</span>
<span class="ct" style="left:276px;top:201px">EUR = 9.2</span>
<span class="ct" style="left:276px;top:213px">GBP = 29.7</span>
<span class="ct" style="left:276px;top:225px">CHF = -5.4</span>
<span class="ct" style="left:276px;top:237px">AUD = -35.8</span>
<span class="ct" style="left:276px;top:249px">CAD = -12.6</span>
<span class="ct" style="left:276px;top:261px">JPY = 45.8</span>
<span class="ct" style="left:276px;top:273px">NZD = -48.1</span>
<span class="ct" style="left:276px;top:298px">Ширина канала 0 = -31.72</span>
<span class="ct" style="left:276px;top:310px">Ширина канала 1 = 3.84</span>
<span class="ct" style="left:276px;top:322px">Ширина канала 2 = 15.60</span>
<span class="ct" style="left:276px;top:334px">Ширина канала 3 = 4.77</span>
<span class="ct" style="left:276px;top:346px">Ширина канала 4 = 13.63</span>
<span class="ct" style="left:276px;top:358px">Ширина канала 5 = 1.40</span>
<span class="ct" style="left:276px;top:370px">Ширина канала 6 = 22.77</span>
<span class="ct" style="left:276px;top:382px">Ширина канала 7 = 8.80</span>
<span class="ct" style="left:271px;top:406px">CROSS = 0.0</span>
<span class="ct" style="left:271px;top:418px">GAP = 5.0</span>
<span class="ct" style="left:271px;top:430px">Середина канала = 0,0021</span>
<svg class="abs" style="left:0;top:0" width="1280" height="780" viewBox="0 0 1280 780" shape-rendering="crispEdges"><path d="M266.5 195V212M286.5 285V326M306.5 372V438M314.5 372V400M322.5 334V433M326.5 323V349M330.5 288V350M334.5 315V326M338.5 309V331M346.5 281V323M350.5 240V296M358.5 266V293M374.5 359V415M394.5 410V477M398.5 360V412M402.5 337V386M410.5 329V407M422.5 312V384M438.5 363V376M442.5 331V384M458.5 442V470M474.5 400V496M478.5 405V428M482.5 384V431M490.5 393V433M494.5 384V408M498.5 370V425M506.5 384V400M510.5 329V385M514.5 313V358M518.5 304V329M522.5 276V315M526.5 269V295M530.5 244V282M538.5 214V271M542.5 214V289M546.5 188V225M550.5 170V222M554.5 163V193M558.5 155V182M578.5 214V247M582.5 202V219M590.5 161V285M602.5 255V274M614.5 264V319M618.5 260V284M646.5 337V390M650.5 326V356M662.5 353V416M666.5 304V364M674.5 264V319M682.5 255V350M686.5 216V285M690.5 192V244M694.5 192V248M726.5 337V367M738.5 356V409M742.5 382V424M746.5 360V389M750.5 345V378M754.5 348V394M762.5 334V375M774.5 359V370M778.5 337V372M782.5 319V353M786.5 264V334M790.5 266V274M794.5 260V275M798.5 233V266M822.5 576V600M838.5 631V672M842.5 621V649M846.5 609V646M850.5 582V632M858.5 571V639M862.5 545V579M874.5 556V601M882.5 537V595M898.5 543V598M906.5 568V631M914.5 576V620M918.5 519V586M926.5 528V586M930.5 492V583M942.5 528V543M950.5 485V561M958.5 624V647M966.5 601V628M978.5 619V680M1002.5 661V714M1006.5 656V676M1010.5 634V672M1026.5 638V681M1030.5 649V658M1034.5 651V658M1038.5 638V661M1046.5 638V646M1050.5 546V646M1054.5 569V578M1058.5 548V576M1062.5 563V567M1066.5 538V605M1074.5 508V560M1078.5 519V541M1086.5 537V557M1094.5 513V575M1102.5 522V537M1106.5 515V534M1110.5 512V535M1114.5 430V519M1118.5 353V437M1122.5 319V391M1126.5 286V327M1138.5 200V319M1142.5 185V226M1178.5 264V353M1194.5 290V335M1210.5 283V415" stroke="#4db389" stroke-width="1" fill="none"/><path d="M270.5 184V200M274.5 186V281M278.5 275V309M282.5 299V323M290.5 301V340M294.5 301V361M298.5 334V411M302.5 359V435M310.5 356V397M318.5 378V426M342.5 307V334M354.5 234V301M362.5 264V312M366.5 304V345M370.5 331V408M378.5 367V413M382.5 393V414M386.5 400V435M390.5 431V463M406.5 370V399M414.5 327V353M418.5 333V386M426.5 340V386M430.5 347V372M434.5 353V377M446.5 336V424M450.5 408V463M454.5 447V459M462.5 440V495M466.5 454V506M470.5 440V522M486.5 384V407M502.5 369V401M534.5 252V304M562.5 152V195M566.5 176V222M570.5 202V243M574.5 203V248M586.5 206V274M594.5 161V248M598.5 240V277M606.5 264V299M610.5 274V327M622.5 274V304M626.5 296V319M630.5 315V336M634.5 329V378M638.5 348V385M642.5 367V408M654.5 337V359M658.5 344V400M670.5 288V320M678.5 267V304M698.5 197V218M702.5 192V279M706.5 248V311M710.5 256V304M714.5 288V359M718.5 312V352M722.5 335V381M730.5 331V398M734.5 376V412M758.5 345V383M766.5 304V376M770.5 345V376M802.5 227V270M806.5 264V405M810.5 319V501M814.5 497V575M818.5 545V594M826.5 568V619M830.5 576V664M834.5 605V688M854.5 569V630M866.5 553V567M870.5 561V600M878.5 568V600M886.5 539V575M890.5 556V574M894.5 569V591M902.5 561V617M910.5 572V623M922.5 534V600M934.5 530V560M946.5 523V575M954.5 543V647M962.5 608V651M970.5 616V664M974.5 620V672M982.5 617V638M986.5 616V640M990.5 630V642M994.5 630V709M998.5 684V728M1014.5 649V657M1018.5 624V672M1022.5 631V672M1042.5 617V664M1070.5 537V575M1082.5 528V565M1090.5 539V580M1098.5 513V548M1130.5 293V318M1134.5 289V319M1146.5 214V312M1150.5 288V312M1154.5 304V350M1158.5 312V337M1162.5 289V345M1166.5 331V337M1170.5 320V364M1174.5 334V367M1182.5 255V288M1186.5 264V320M1190.5 271V340M1198.5 283V319M1202.5 296V428M1206.5 386V427" stroke="#e26d55" stroke-width="1" fill="none"/><path d="M265.5 197.8h2V210.5h-2zM285.5 307.2h2V322.6h-2zM305.5 378.3h2V432.0h-2zM313.5 386.5h2V388.3h-2zM321.5 348.2h2V415.6h-2zM325.5 334.6h2V347.2h-2zM329.5 320.9h2V347.2h-2zM333.5 318.2h2V322.6h-2zM337.5 312.7h2V319.9h-2zM345.5 294.9h2V317.2h-2zM349.5 243.0h2V293.9h-2zM357.5 267.6h2V289.8h-2zM373.5 367.4h2V388.3h-2zM393.5 411.2h2V457.1h-2zM397.5 384.2h2V409.0h-2zM401.5 377.2h2V384.4h-2zM409.5 338.5h2V395.0h-2zM421.5 343.2h2V369.2h-2zM437.5 365.5h2V372.7h-2zM441.5 336.2h2V363.3h-2zM457.5 448.7h2V450.0h-2zM473.5 428.8h2V486.4h-2zM477.5 412.4h2V425.4h-2zM481.5 404.2h2V417.2h-2zM489.5 404.2h2V405.5h-2zM493.5 400.6h2V406.7h-2zM497.5 384.2h2V398.5h-2zM505.5 385.4h2V398.5h-2zM509.5 345.6h2V383.2h-2zM513.5 331.5h2V344.6h-2zM517.5 317.5h2V327.0h-2zM521.5 290.5h2V312.9h-2zM525.5 278.8h2V289.5h-2zM529.5 258.1h2V280.3h-2zM537.5 244.4h2V266.7h-2zM541.5 217.1h2V244.8h-2zM545.5 213.0h2V214.7h-2zM549.5 193.8h2V213.3h-2zM553.5 181.5h2V191.5h-2zM557.5 161.0h2V180.5h-2zM577.5 217.1h2V239.3h-2zM581.5 213.0h2V216.1h-2zM589.5 195.2h2V236.6h-2zM601.5 270.4h2V272.1h-2zM613.5 282.7h2V309.0h-2zM617.5 275.9h2V281.7h-2zM645.5 356.5h2V388.3h-2zM649.5 342.9h2V352.8h-2zM661.5 356.5h2V385.6h-2zM665.5 316.9h2V352.8h-2zM673.5 275.9h2V317.2h-2zM681.5 284.0h2V288.4h-2zM685.5 241.6h2V281.6h-2zM689.5 233.4h2V242.0h-2zM693.5 203.3h2V228.3h-2zM725.5 346.9h2V365.0h-2zM737.5 390.6h2V406.0h-2zM741.5 386.5h2V391.0h-2zM745.5 364.6h2V385.5h-2zM749.5 360.5h2V362.3h-2zM753.5 356.4h2V358.2h-2zM761.5 356.4h2V362.3h-2zM773.5 363.3h2V365.0h-2zM777.5 349.6h2V367.7h-2zM781.5 335.9h2V350.0h-2zM785.5 271.7h2V332.2h-2zM789.5 268.9h2V271.2h-2zM793.5 262.1h2V273.4h-2zM797.5 248.4h2V262.5h-2zM821.5 585.0h2V589.5h-2zM837.5 632.9h2V660.6h-2zM841.5 632.9h2V637.3h-2zM845.5 616.4h2V631.9h-2zM849.5 586.4h2V616.8h-2zM857.5 576.8h2V619.5h-2zM861.5 557.7h2V577.2h-2zM873.5 574.1h2V599.0h-2zM881.5 542.6h2V579.9h-2zM897.5 575.4h2V590.8h-2zM905.5 600.0h2V610.0h-2zM913.5 585.0h2V608.6h-2zM917.5 544.0h2V584.0h-2zM925.5 554.9h2V584.0h-2zM929.5 535.8h2V553.9h-2zM941.5 537.1h2V541.6h-2zM949.5 549.4h2V559.3h-2zM957.5 636.9h2V637.2h-2zM965.5 624.6h2V626.3h-2zM977.5 625.9h2V670.1h-2zM1001.5 676.5h2V711.1h-2zM1005.5 671.1h2V672.8h-2zM1009.5 653.3h2V668.7h-2zM1025.5 656.0h2V657.7h-2zM1029.5 654.6h2V656.4h-2zM1033.5 655.2h2V655.8h-2zM1037.5 639.6h2V656.4h-2zM1045.5 639.6h2V642.7h-2zM1049.5 575.3h2V635.9h-2zM1053.5 574.0h2V574.9h-2zM1057.5 564.4h2V574.3h-2zM1061.5 565.2h2V565.6h-2zM1065.5 539.8h2V562.0h-2zM1073.5 541.2h2V557.9h-2zM1077.5 533.0h2V538.8h-2zM1085.5 543.9h2V555.2h-2zM1093.5 523.4h2V573.0h-2zM1101.5 530.2h2V534.7h-2zM1105.5 524.8h2V527.9h-2zM1109.5 520.7h2V522.9h-2zM1113.5 434.4h2V513.5h-2zM1117.5 378.3h2V434.7h-2zM1121.5 326.4h2V376.0h-2zM1125.5 299.0h2V325.4h-2zM1137.5 225.2h2V317.2h-2zM1141.5 215.6h2V224.2h-2zM1177.5 271.7h2V344.5h-2zM1193.5 292.2h2V313.1h-2zM1209.5 285.3h2V407.4h-2z" fill="#f4fff9" stroke="#52c696" stroke-width="1"/><path d="M269.5 196.5h2V198.2h-2zM273.5 200.6h2V274.8h-2zM277.5 278.5h2V306.2h-2zM281.5 301.8h2V317.2h-2zM289.5 307.2h2V314.4h-2zM293.5 307.2h2V358.2h-2zM297.5 359.2h2V404.7h-2zM301.5 372.9h2V432.0h-2zM309.5 378.3h2V391.0h-2zM317.5 381.1h2V415.6h-2zM341.5 312.7h2V328.1h-2zM353.5 241.6h2V288.4h-2zM361.5 288.1h2V309.0h-2zM365.5 310.0h2V336.3h-2zM369.5 334.6h2V388.3h-2zM377.5 371.5h2V393.7h-2zM381.5 396.0h2V412.5h-2zM385.5 413.5h2V432.5h-2zM389.5 432.3h2V457.1h-2zM405.5 372.5h2V395.0h-2zM413.5 336.2h2V350.4h-2zM417.5 353.8h2V370.4h-2zM425.5 344.4h2V357.5h-2zM429.5 359.6h2V365.7h-2zM433.5 365.5h2V371.5h-2zM445.5 337.4h2V412.5h-2zM449.5 411.2h2V453.5h-2zM453.5 452.2h2V453.5h-2zM461.5 449.9h2V468.8h-2zM465.5 471.0h2V474.6h-2zM469.5 476.8h2V484.0h-2zM485.5 401.8h2V405.5h-2zM501.5 380.7h2V398.5h-2zM533.5 256.7h2V268.0h-2zM561.5 162.4h2V183.3h-2zM565.5 182.9h2V210.6h-2zM569.5 210.2h2V232.5h-2zM573.5 230.7h2V244.8h-2zM585.5 213.0h2V237.9h-2zM593.5 192.5h2V244.8h-2zM597.5 244.4h2V255.7h-2zM605.5 273.1h2V276.2h-2zM609.5 280.0h2V310.4h-2zM621.5 277.2h2V300.8h-2zM625.5 300.5h2V317.2h-2zM629.5 316.9h2V330.9h-2zM633.5 331.9h2V355.5h-2zM637.5 355.2h2V378.8h-2zM641.5 382.5h2V387.0h-2zM653.5 341.5h2V355.5h-2zM657.5 356.5h2V389.7h-2zM669.5 315.5h2V317.2h-2zM677.5 273.0h2V287.1h-2zM697.5 202.8h2V205.0h-2zM701.5 203.3h2V266.6h-2zM705.5 268.9h2V285.7h-2zM709.5 288.1h2V291.2h-2zM713.5 290.8h2V319.9h-2zM717.5 319.5h2V325.4h-2zM721.5 356.4h2V360.9h-2zM729.5 345.5h2V388.3h-2zM733.5 390.6h2V404.7h-2zM757.5 356.4h2V365.0h-2zM765.5 356.4h2V360.9h-2zM769.5 361.9h2V366.4h-2zM801.5 251.2h2V266.6h-2zM805.5 271.7h2V340.4h-2zM809.5 343.0h2V497.9h-2zM813.5 500.2h2V556.7h-2zM817.5 556.3h2V588.1h-2zM825.5 586.4h2V596.3h-2zM829.5 600.0h2V646.9h-2zM833.5 647.9h2V661.9h-2zM853.5 587.7h2V618.2h-2zM865.5 559.0h2V563.5h-2zM869.5 564.5h2V597.7h-2zM877.5 571.3h2V578.5h-2zM885.5 544.0h2V564.9h-2zM889.5 568.6h2V571.7h-2zM893.5 575.4h2V589.5h-2zM901.5 576.8h2V614.1h-2zM909.5 601.4h2V610.0h-2zM921.5 545.3h2V586.7h-2zM933.5 535.8h2V541.6h-2zM945.5 534.3h2V560.7h-2zM953.5 549.4h2V635.9h-2zM961.5 620.5h2V624.9h-2zM969.5 621.8h2V637.2h-2zM973.5 638.2h2V670.1h-2zM981.5 623.2h2V629.0h-2zM985.5 624.6h2V637.2h-2zM989.5 635.5h2V637.2h-2zM993.5 632.8h2V702.9h-2zM997.5 705.2h2V709.7h-2zM1013.5 650.5h2V655.0h-2zM1017.5 649.2h2V659.1h-2zM1021.5 657.4h2V661.9h-2zM1041.5 636.9h2V641.3h-2zM1069.5 541.2h2V559.3h-2zM1081.5 543.9h2V556.6h-2zM1089.5 546.6h2V570.2h-2zM1097.5 522.0h2V533.3h-2zM1129.5 301.8h2V311.7h-2zM1133.5 300.4h2V315.8h-2zM1145.5 215.6h2V296.7h-2zM1149.5 297.7h2V309.0h-2zM1153.5 310.0h2V314.4h-2zM1157.5 316.8h2V333.6h-2zM1161.5 329.1h2V333.6h-2zM1165.5 334.0h2V335.2h-2zM1169.5 335.9h2V344.5h-2zM1173.5 341.4h2V348.6h-2zM1181.5 273.0h2V285.7h-2zM1185.5 285.3h2V303.5h-2zM1189.5 305.9h2V317.2h-2zM1197.5 289.4h2V310.3h-2zM1201.5 315.4h2V388.3h-2zM1205.5 390.6h2V411.5h-2z" fill="#2a1410" stroke="#f0654a" stroke-width="1"/></svg>
<!-- chart tabs -->
<div class="abs" style="left:262px;top:770px;width:1001px;height:22px;background:#f0f0f0;border-top:1px solid #111"></div>
<div class="abs" style="left:352px;top:770px;width:84px;height:21px;background:#fff;border:1px solid #111;border-top:none;box-shadow:1px 1px 0 #888"></div>
<span class="tab" style="left:278px;top:774px;transform:scaleX(0.885)">EURUSD,H4</span>
<span class="tab" style="left:362px;top:774px;color:#000;transform:scaleX(0.885)">EURUSD,H4</span>
<span class="tab" style="left:446px;top:774px;transform:scaleX(0.885)">AUDCAD,H4</span><div class="sep" style="left:524px;top:775px;height:13px"></div>
<span class="tab" style="left:534px;top:774px;transform:scaleX(0.885)">AUDCHF,H4</span><div class="sep" style="left:612px;top:775px;height:13px"></div>
<span class="tab" style="left:622px;top:774px;transform:scaleX(0.885)">AUDJPY,H4</span><div class="sep" style="left:695px;top:775px;height:13px"></div>
<span class="tab" style="left:706px;top:774px;transform:scaleX(0.885)">AUDNZD,H4</span><div class="sep" style="left:784px;top:775px;height:13px"></div>
<span class="tab" style="left:795px;top:774px;transform:scaleX(0.885)">AUDUSD,H4</span><div class="sep" style="left:872px;top:775px;height:13px"></div>
<span class="tab" style="left:882px;top:774px;transform:scaleX(0.885)">CADCHF,H4</span><div class="sep" style="left:959px;top:775px;height:13px"></div>
<span class="tab" style="left:970px;top:774px;transform:scaleX(0.885)">CADJPY,H4</span><div class="sep" style="left:1042px;top:775px;height:13px"></div>
<span class="tab" style="left:1053px;top:774px;transform:scaleX(0.885)">CHFJPY,H4</span><div class="sep" style="left:1122px;top:775px;height:13px"></div>
<span class="tab" style="left:1133px;top:774px;transform:scaleX(0.885)">EURAUD,H4</span><div class="sep" style="left:1206px;top:775px;height:13px"></div>
<span class="tab" style="left:1216px;top:774px;width:13px;overflow:hidden;transform:scaleX(0.885)">EURCAD</span>
<svg class="ic" style="left:1230px;top:776px" width="30" height="10" viewBox="0 0 30 10"><path d="M5.500 1.500 v7 l-4-3.500 z" fill="#9a9a9a"/><path d="M23 1 v8 l4.500-4 z" fill="#111"/></svg>
<div class="hl" style="left:15px;top:792px;width:1249px;background:#fdfdfd"></div>
<div class="hl" style="left:15px;top:794px;width:1249px;background:#b8b8b8"></div>
<!-- terminal -->
<svg class="ic" style="left:18px;top:797px" width="9" height="9" viewBox="0 0 9 9"><path d="M1.500 1.500 l6 6 M7.500 1.500 l-6 6" stroke="#111" stroke-width="1.700"/></svg>
<div class="abs" style="left:16px;top:905px;width:14px;height:53px;background:#d3ddeb"></div>
<span class="t" style="left:0;top:0;font-size:11px;transform-origin:0 0;transform:translate(16px,956px) rotate(-90deg)">Терминал</span>
<div class="abs" style="left:30px;top:796px;width:1230px;height:141px;background:#fff;border-left:1px solid #a5acb5;border-top:1px solid #a5acb5;border-bottom:1px solid #111"></div>
<span class="t" style="left:38px;top:802px;font-size:12.500px">Ордер</span>
<span class="t" style="right:969px;top:802px;font-size:12.500px">Время</span>
<span class="t" style="right:886px;top:802px;font-size:12.500px">Тип</span>
<span class="t" style="right:822px;top:802px;font-size:12.500px">Объем</span>
<span class="t" style="right:739px;top:802px;font-size:12.500px">Символ</span>
<span class="t" style="right:647px;top:802px;font-size:12.500px">Цена</span>
<span class="t" style="right:555px;top:802px;font-size:12.500px">S / L</span>
<span class="t" style="right:463px;top:802px;font-size:12.500px">T / P</span>
<span class="t" style="right:371px;top:802px;font-size:12.500px">Цена</span>
<span class="t" style="right:279px;top:802px;font-size:12.500px">Комиссия</span>
<span class="t" style="right:187px;top:802px;font-size:12.500px">Своп</span>
<span class="t" style="right:43px;top:802px;font-size:12.500px">Прибыль</span>
<svg class="ic" style="left:81px;top:805px" width="6" height="8" viewBox="0 0 6 8"><path d="M1 7 l4-6" stroke="#888" stroke-width="1"/></svg>
<div class="abs" style="left:150px;top:797px;width:1px;height:104px;background:#e2e2e2"></div>
<div class="abs" style="left:316px;top:797px;width:1px;height:104px;background:#e2e2e2"></div>
<div class="abs" style="left:399px;top:797px;width:1px;height:104px;background:#e2e2e2"></div>
<div class="abs" style="left:463px;top:797px;width:1px;height:104px;background:#e2e2e2"></div>
<div class="abs" style="left:546px;top:797px;width:1px;height:104px;background:#e2e2e2"></div>
<div class="abs" style="left:638px;top:797px;width:1px;height:104px;background:#e2e2e2"></div>
<div class="abs" style="left:730px;top:797px;width:1px;height:104px;background:#e2e2e2"></div>
<div class="abs" style="left:822px;top:797px;width:1px;height:104px;background:#e2e2e2"></div>
<div class="abs" style="left:914px;top:797px;width:1px;height:104px;background:#e2e2e2"></div>
<div class="abs" style="left:1006px;top:797px;width:1px;height:104px;background:#e2e2e2"></div>
<div class="abs" style="left:1098px;top:797px;width:1px;height:104px;background:#e2e2e2"></div>
<div class="tr" style="top:821px;background:#0078d7;color:#fff"><svg class="ic" style="left:3px;top:2px" width="16" height="17" viewBox="0 0 16 17"><path d="M1.500 1.500 h7 l3 3 v10 h-10 z" fill="#fff" stroke="#8a6a4a"/><circle cx="10.500" cy="12" r="3.500" fill="#e8552d" stroke="#9a2d10"/></svg><span style="left:22px">1285355542</span><span style="right:929px">2017.11.17 16:00:40</span><span style="right:846px">sell</span><span style="right:783px">0.01</span><span style="right:700px">gbpusd</span><span style="right:607px">1.3176</span><span style="right:515px">0.0000</span><span style="right:423px">0.0000</span><span style="right:332px">1.3269</span><span style="right:240px">0.00</span><span style="right:148px">0.00</span><span style="right:24px">-0.93</span><svg class="ic" style="left:1197px;top:6px" width="8" height="8" viewBox="0 0 8 8"><path d="M1 1 l6 6 M7 1 l-6 6" stroke="#cfe4f7" stroke-width="1.600"/></svg><div class="abs" style="left:119px;top:0;width:1px;height:20px;background:#5aa6e6"></div><div class="abs" style="left:285px;top:0;width:1px;height:20px;background:#5aa6e6"></div><div class="abs" style="left:368px;top:0;width:1px;height:20px;background:#5aa6e6"></div><div class="abs" style="left:432px;top:0;width:1px;height:20px;background:#5aa6e6"></div><div class="abs" style="left:515px;top:0;width:1px;height:20px;background:#5aa6e6"></div><div class="abs" style="left:607px;top:0;width:1px;height:20px;background:#5aa6e6"></div><div class="abs" style="left:699px;top:0;width:1px;height:20px;background:#5aa6e6"></div><div class="abs" style="left:791px;top:0;width:1px;height:20px;background:#5aa6e6"></div><div class="abs" style="left:883px;top:0;width:1px;height:20px;background:#5aa6e6"></div><div class="abs" style="left:975px;top:0;width:1px;height:20px;background:#5aa6e6"></div><div class="abs" style="left:1067px;top:0;width:1px;height:20px;background:#5aa6e6"></div></div>
<div class="tr" style="top:841px;background:#fff;color:#000"><svg class="ic" style="left:3px;top:2px" width="16" height="17" viewBox="0 0 16 17"><path d="M1.500 1.500 h7 l3 3 v10 h-10 z" fill="#fff" stroke="#8a6a4a"/><circle cx="10.500" cy="12" r="3.500" fill="#e8552d" stroke="#9a2d10"/></svg><span style="left:22px">1285491198</span><span style="right:929px">2017.11.20 04:00:53</span><span style="right:846px">sell</span><span style="right:783px">0.01</span><span style="right:700px">eurnzd</span><span style="right:607px">1.7242</span><span style="right:515px">0.0000</span><span style="right:423px">0.0000</span><span style="right:332px">1.7284</span><span style="right:240px">0.00</span><span style="right:148px">0.00</span><span style="right:24px">-0.29</span><svg class="ic" style="left:1197px;top:6px" width="8" height="8" viewBox="0 0 8 8"><path d="M1 1 l6 6 M7 1 l-6 6" stroke="#9a9a9a" stroke-width="1.600"/></svg></div>
<div class="tr" style="top:861px;background:#f0f0f0;color:#000"><svg class="ic" style="left:3px;top:2px" width="16" height="17" viewBox="0 0 16 17"><path d="M1.500 1.500 h7 l3 3 v10 h-10 z" fill="#fff" stroke="#8a6a4a"/><circle cx="10.500" cy="12" r="3.500" fill="#e8552d" stroke="#9a2d10"/></svg><span style="left:22px">1285491199</span><span style="right:929px">2017.11.20 04:00:53</span><span style="right:846px">sell</span><span style="right:783px">0.01</span><span style="right:700px">gbpaud</span><span style="right:607px">1.7458</span><span style="right:515px">0.0000</span><span style="right:423px">0.0000</span><span style="right:332px">1.7532</span><span style="right:240px">0.00</span><span style="right:148px">0.00</span><span style="right:24px">-0.56</span><svg class="ic" style="left:1197px;top:6px" width="8" height="8" viewBox="0 0 8 8"><path d="M1 1 l6 6 M7 1 l-6 6" stroke="#9a9a9a" stroke-width="1.600"/></svg></div>
<div class="tr" style="top:881px;background:#fff;color:#000"><svg class="ic" style="left:3px;top:2px" width="16" height="17" viewBox="0 0 16 17"><path d="M1.500 1.500 h7 l3 3 v10 h-10 z" fill="#fff" stroke="#8a6a4a"/><circle cx="10.500" cy="12" r="3.500" fill="#e8552d" stroke="#9a2d10"/></svg><span style="left:22px">1285511235</span><span style="right:929px">2017.11.20 08:00:42</span><span style="right:846px">sell</span><span style="right:783px">0.01</span><span style="right:700px">gbpnzd</span><span style="right:607px">1.9337</span><span style="right:515px">0.0000</span><span style="right:423px">0.0000</span><span style="right:332px">1.9423</span><span style="right:240px">0.00</span><span style="right:148px">0.00</span><span style="right:24px">-0.59</span><svg class="ic" style="left:1197px;top:6px" width="8" height="8" viewBox="0 0 8 8"><path d="M1 1 l6 6 M7 1 l-6 6" stroke="#9a9a9a" stroke-width="1.600"/></svg></div>
<div class="tr" style="top:901px;height:20px;background:#cdcdcd;font-weight:bold"><svg class="ic" style="left:4px;top:4px" width="11" height="12" viewBox="0 0 14 14" preserveAspectRatio="none"><rect x="0.500" y="0.500" width="13" height="13" rx="1.500" fill="#fff" stroke="#b04a2a"/><path d="M7 11.500 l-3.500-4 h2.200 v-4.500 h2.600 v4.500 h2.200 z" fill="#e8552d" stroke="#9a2d10" stroke-width="0.600"/></svg><span style="left:22px;transform:scaleX(0.975)">Баланс: 1 513.03 USD&nbsp; Средства: 1 502.98&nbsp; Маржа: 2.31&nbsp; Свободная маржа: 1 500.67&nbsp; Уровень: 65136.79%</span><span style="right:24px">-10.05</span></div>
<div class="abs" style="left:1243px;top:797px;width:17px;height:139px;background:#f0f0f0"></div>
<div class="abs" style="left:1244px;top:889px;width:15px;height:29px;background:#cdcdcd"></div>
<svg class="ic" style="left:1246px;top:803px" width="12" height="8" viewBox="0 0 12 8"><path d="M1.500 6.500 l4.500-4.500 4.500 4.500" fill="none" stroke="#444" stroke-width="1.400"/></svg>
<svg class="ic" style="left:1246px;top:924px" width="12" height="8" viewBox="0 0 12 8"><path d="M1.500 1.500 l4.500 4.500 4.500-4.500" fill="none" stroke="#444" stroke-width="1.400"/></svg>
<div class="abs" style="left:34px;top:936px;width:71px;height:20px;background:#fff;border:1px solid #111;border-top:none;box-shadow:1px 1px 0 #888"></div>
<span class="t" style="left:43px;top:939px;font-size:12.500px">Торговля</span>
<span class="tab" style="left:115px;top:939px">Активы</span><div class="sep" style="left:166px;top:940px;height:13px"></div>
<span class="tab" style="left:176px;top:939px">История Счета</span><div class="sep" style="left:268px;top:940px;height:13px"></div>
<span class="tab" style="left:278px;top:939px">Новости</span><div class="sep" style="left:335px;top:940px;height:13px"></div>
<span class="tab" style="left:345px;top:939px">Алерты</span><div class="sep" style="left:397px;top:940px;height:13px"></div>
<span class="tab" style="left:407px;top:939px">Почта</span><div class="sep" style="left:458px;top:940px;height:13px"></div>
<span class="tab" style="left:468px;top:939px">Маркет</span><div class="sep" style="left:530px;top:940px;height:13px"></div>
<span class="tab" style="left:541px;top:939px">Сигналы</span><div class="sep" style="left:599px;top:940px;height:13px"></div>
<span class="tab" style="left:609px;top:939px">Библиотека</span><div class="sep" style="left:684px;top:940px;height:13px"></div>
<span class="tab" style="left:695px;top:939px">Эксперты</span><div class="sep" style="left:758px;top:940px;height:13px"></div>
<span class="tab" style="left:768px;top:939px">Журнал</span><div class="sep" style="left:822px;top:940px;height:13px"></div>
<span class="t" style="left:442px;top:944px;font-size:9px;color:#d03020">8</span><span class="t" style="left:510px;top:944px;font-size:9px;color:#d03020">34</span>
<div class="hl" style="left:15px;top:961px;width:1249px;background:#b0b0b0"></div><div class="hl" style="left:15px;top:962px;width:1249px;background:#fdfdfd"></div>
<span class="t" style="left:16.5px;top:968px;transform:scaleX(0.975)">Для вызова справки нажмите F1</span>
<div class="vl" style="left:550px;top:965px;height:19px;background:#c4c4c4"></div><span class="t" style="left:557px;top:968px">Default</span>
<div class="vl" style="left:667px;top:965px;height:19px;background:#c4c4c4"></div><span class="t" style="left:673px;top:968px">2017.10.20 16:00</span>
<div class="vl" style="left:769px;top:965px;height:19px;background:#c4c4c4"></div><span class="t" style="left:775px;top:968px">O: 1.1801</span>
<div class="vl" style="left:839px;top:965px;height:19px;background:#c4c4c4"></div><span class="t" style="left:846px;top:968px">H: 1.1804</span>
<div class="vl" style="left:910px;top:965px;height:19px;background:#c4c4c4"></div><span class="t" style="left:917px;top:968px">L: 1.1762</span>
<div class="vl" style="left:979px;top:965px;height:19px;background:#c4c4c4"></div><span class="t" style="left:985px;top:968px">C: 1.1783</span>
<div class="vl" style="left:1049px;top:965px;height:19px;background:#c4c4c4"></div><span class="t" style="left:1055px;top:968px">V: 1943</span>
<div class="vl" style="left:1114px;top:965px;height:19px;background:#c4c4c4"></div><span class="t" style="left:1148px;top:968px">1737/8 kb</span>
<svg class="ic" style="left:1121px;top:968px" width="24" height="12" viewBox="0 0 24 12"><rect x="0" y="8.0" width="1" height="4.0" fill="#c0392b"/><rect x="2" y="6.8" width="1" height="5.2" fill="#3a9a3a"/><rect x="4" y="5.6" width="1" height="6.4" fill="#3a9a3a"/><rect x="6" y="4.4" width="1" height="7.6" fill="#c0392b"/><rect x="8" y="3.2" width="1" height="8.8" fill="#3a9a3a"/><rect x="10" y="2.0" width="1" height="10.0" fill="#3a9a3a"/><rect x="12" y="0.8" width="1" height="11.2" fill="#c0392b"/><rect x="14" y="0.0" width="1" height="12.0" fill="#3a9a3a"/><rect x="16" y="0.0" width="1" height="12.0" fill="#3a9a3a"/><rect x="18" y="0.0" width="1" height="12.0" fill="#c0392b"/><rect x="20" y="0.0" width="1" height="12.0" fill="#3a9a3a"/><rect x="22" y="0.0" width="1" height="12.0" fill="#3a9a3a"/></svg>
<svg class="ic" style="left:1250px;top:972px" width="12" height="12" viewBox="0 0 12 12"><path d="M11 1 l-10 10 M11 5 l-6 6 M11 9 l-2 2" stroke="#a8a8a8" stroke-width="1"/></svg>
<div class="hl" style="left:14px;top:984px;width:1251px;background:#5b7f6c"></div>
<!-- taskbar -->
<div id="taskbar" class="abs" style="left:0;top:994px;width:1280px;height:30px;background:#0d391d;overflow:hidden">
<div class="abs" style="left:0;top:0;width:1280px;height:30px;background:radial-gradient(ellipse 160px 30px at 640px 10px,rgba(40,90,50,.35),transparent),radial-gradient(ellipse 200px 30px at 900px 20px,rgba(5,30,12,.5),transparent),radial-gradient(ellipse 140px 25px at 450px 18px,rgba(30,80,45,.3),transparent)"></div>
<div class="abs" style="left:333px;top:0;width:36px;height:30px;background:#16643a"></div>
<div class="abs" style="left:189px;top:28px;width:28px;height:2px;background:#8fd6b0"></div>
<div class="abs" style="left:263px;top:28px;width:28px;height:2px;background:#8fd6b0"></div>
<div class="abs" style="left:333px;top:28px;width:36px;height:2px;background:#8fd6b0"></div>
<svg class="ic" style="left:0;top:0" width="380" height="30" viewBox="0 0 380 30">
<path d="M10 9 l7-1 v7 h-7 z M18 7.800 l8-1.200 v8.400 h-8 z M10 16 h7 v7 l-7-1 z M18 16 h8 v8.400 l-8-1.200 z" fill="#fff"/>
<circle cx="56.500" cy="12.500" r="5.200" fill="none" stroke="#fff" stroke-width="1.400"/><path d="M52.800 16.500 l-6.300 7" stroke="#fff" stroke-width="1.500"/>
<rect x="84.500" y="8.500" width="11" height="13" fill="none" stroke="#fff" stroke-width="1.300"/><path d="M82.500 10 h-2 v10 h2 M97.500 10 h2 v10 h-2" fill="none" stroke="#fff" stroke-width="1.300"/>
<rect x="122" y="7" width="15" height="16" fill="#dfe5ea"/><rect x="123.500" y="8.500" width="12" height="13" fill="#e88a2e"/><path d="M127 11 l6 4 -6 4 z" fill="#fff"/>
<path d="M158 16 a7.500 7.500 0 1 1 14.500 1.500 h-10 a4 4 0 0 0 7.500 2.500 v3 a8 8 0 0 1 -12 -7 z M162.500 14 h6 a3 3 0 0 0 -6 0 z" fill="#2a86d8" fill-rule="evenodd"/>
<path d="M195 16 a7.500 7.500 0 1 1 14.500 1.500 h-10 a4 4 0 0 0 7.500 2 l2 1.500 a8 8 0 0 1 -14 -5 z M199.500 14 h6 a3 3 0 0 0 -6 0 z" fill="#5db5ea" fill-rule="evenodd"/><ellipse cx="202.500" cy="14.500" rx="10" ry="4" fill="none" stroke="#e9c84a" stroke-width="1.400" transform="rotate(-28 202.500 14.500)"/>
<circle cx="239.500" cy="15" r="8" fill="#e24a3a"/><path d="M239.500 15 L232.600 19 A8 8 0 0 0 243.500 21.900 z" fill="#3aa757"/><path d="M239.500 15 L243.500 21.900 A8 8 0 0 0 247.500 15 z" fill="#f3c623"/><circle cx="239.500" cy="15" r="3.600" fill="#fff"/><circle cx="239.500" cy="15" r="2.800" fill="#4a8af0"/>
<path d="M269 8 h6 l1.500 2 h9.500 v13 h-17 z" fill="#f2d377"/><rect x="272" y="15" width="11" height="8" fill="#5fb0d8"/><rect x="274" y="17.500" width="7" height="3" fill="#dff1fa"/>
<rect x="306" y="9" width="16" height="12" fill="#fff"/><path d="M306 9 l8 6.500 8-6.500" fill="none" stroke="#0d391d" stroke-width="1.400"/><path d="M306 21 l6-5 M322 21 l-6-5" stroke="#0d391d" stroke-width="1"/>
<circle cx="351" cy="14.500" r="7" fill="#b3261c"/><path d="M346 12 q5-4 10 0 M345.500 17 q5.500 4 11 0" fill="none" stroke="#7d140e" stroke-width="1.600"/>
</svg>
<svg class="ic" style="left:1080px;top:0" width="200" height="30" viewBox="0 0 200 30">
<path d="M6 17.500 l5.500-5.500 5.500 5.500" fill="none" stroke="#fff" stroke-width="1.300"/>
<rect x="30.500" y="8.500" width="11" height="8" fill="none" stroke="#fff" stroke-width="1.200"/><path d="M28 20.500 h8 M32 16.500 v4 M43.500 12 v9.500 h-5" fill="none" stroke="#fff" stroke-width="1.200"/>
<path d="M53 12.500 h3 l4-3.500 v11 l-4-3.500 h-3 z" fill="none" stroke="#fff" stroke-width="1.100"/><path d="M62.500 11.500 q2.500 3 0 6 M65 9.500 q4 5 0 10" fill="none" stroke="#fff" stroke-width="1.100"/>
<path d="M158.500 8.500 h15 v11 h-6 l-3 3 v-3 h-6 z" fill="none" stroke="#fff" stroke-width="1.200"/>
</svg>
<span class="t" style="left:1158px;top:8px;color:#fff;font-size:11.500px">РУС</span>
<span class="t" style="left:1194px;top:8px;color:#fff;font-size:11.500px">11:47</span>
</div>
</body>
</html>
